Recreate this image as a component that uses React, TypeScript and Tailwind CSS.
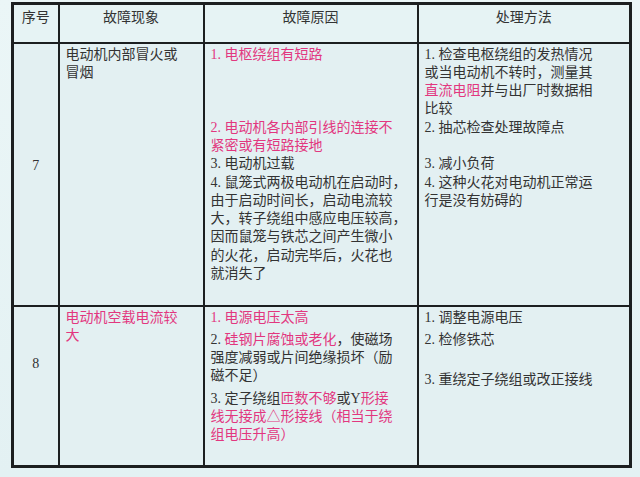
import React from "react";

type Seg = { t: string; red?: boolean };
type Line = Seg[] | string;

const Lines = ({ lines, gapAfter = [] }: { lines: (Line | null)[]; gapAfter?: number[] }) => (
  <div>
    {lines.map((ln, i) => (
      <div
        key={i}
        className={`h-[18.3px] leading-[18.3px] whitespace-nowrap ${gapAfter.includes(i) ? "mb-[4px]" : ""}`}
      >
        {ln === null
          ? "\u00a0"
          : typeof ln === "string"
          ? ln
          : ln.map((s, j) => (
              <span key={j} className={s.red ? "text-[#e2377f]" : ""}>
                {s.t}
              </span>
            ))}
      </div>
    ))}
  </div>
);

const R = (t: string): Seg[] => [{ t, red: true }];

const App = () => {
  return (
    <div className="w-[640px] h-[477px] bg-gradient-to-b from-[#ebf6f7] to-[#e3f1f3] pt-[2px] pl-[11px] text-[14px] text-[#333333] font-['Liberation_Serif','Noto_Sans_CJK_SC',serif]">
      <table className="border-collapse border-[3px] border-[#1c1f20] w-[618px] h-[463px] table-fixed bg-[#e3f0f2]">
        <colgroup>
          <col className="w-[46px]" />
          <col className="w-[145px]" />
          <col className="w-[214px]" />
          <col className="w-[213px]" />
        </colgroup>
        <thead>
          <tr className="h-[39px]">
            {["序号", "故障现象", "故障原因", "处理方法"].map((h) => (
              <th
                key={h}
                className="border-2 border-[#1c1f20] font-normal align-top pt-[2px] text-center bg-[#e6f3f4]"
              >
                {h}
              </th>
            ))}
          </tr>
        </thead>
        <tbody>
          <tr className="h-[263px]">
            <td className="border-2 border-[#1c1f20] align-top text-center pt-[111px]">7</td>
            <td className="border-2 border-[#1c1f20] align-top pl-[6px] pt-[2px]">
              <Lines lines={["电动机内部冒火或", "冒烟"]} />
            </td>
            <td className="border-2 border-[#1c1f20] align-top pl-[6px] pt-[2px]">
              <Lines
                lines={[
                  R("1. 电枢绕组有短路"),
                  null,
                  null,
                  null,
                  R("2. 电动机各内部引线的连接不"),
                  R("紧密或有短路接地"),
                  "3. 电动机过载",
                  "4. 鼠笼式两极电动机在启动时，",
                  "由于启动时间长，启动电流较",
                  "大，转子绕组中感应电压较高，",
                  "因而鼠笼与铁芯之间产生微小",
                  "的火花，启动完毕后，火花也",
                  "就消失了",
                ]}
              />
            </td>
            <td className="border-2 border-[#1c1f20] align-top pl-[6px] pt-[2px]">
              <Lines
                lines={[
                  "1. 检查电枢绕组的发热情况",
                  "或当电动机不转时，测量其",
                  [{ t: "直流电阻", red: true }, { t: "并与出厂时数据相" }],
                  "比较",
                  "2. 抽芯检查处理故障点",
                  null,
                  "3. 减小负荷",
                  "4. 这种火花对电动机正常运",
                  "行是没有妨碍的",
                ]}
              />
            </td>
          </tr>
          <tr className="h-[161px]">
            <td className="border-2 border-[#1c1f20] align-top text-center pt-[46px]">8</td>
            <td className="border-2 border-[#1c1f20] align-top pl-[6px] pt-[2px]">
              <Lines lines={[R("电动机空载电流较"), R("大")]} />
            </td>
            <td className="border-2 border-[#1c1f20] align-top pl-[6px] pt-[2px]">
              <Lines
                gapAfter={[0, 3]}
                lines={[
                  R("1. 电源电压太高"),
                  [{ t: "2. " }, { t: "硅钢片腐蚀或老化", red: true }, { t: "，使磁场" }],
                  "强度减弱或片间绝缘损坏（励",
                  "磁不足）",
                  [
                    { t: "3. 定子绕组" },
                    { t: "匝数不够", red: true },
                    { t: "或Y" },
                    { t: "形接", red: true },
                  ],
                  R("线无接成△形接线（相当于绕"),
                  R("组电压升高）"),
                ]}
              />
            </td>
            <td className="border-2 border-[#1c1f20] align-top pl-[6px] pt-[2px]">
              <Lines
                gapAfter={[0, 2]}
                lines={["1. 调整电源电压", "2. 检修铁芯", null, "3. 重绕定子绕组或改正接线"]}
              />
            </td>
          </tr>
        </tbody>
      </table>
    </div>
  );
};

export default App;
